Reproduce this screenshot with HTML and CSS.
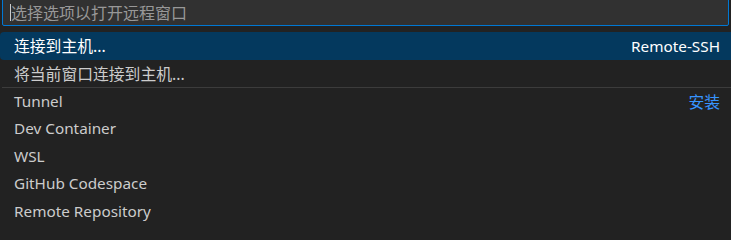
FILE: index.html
```html
<!DOCTYPE html>
<html lang="zh-CN">
<head>
<meta charset="utf-8">
<link rel="stylesheet" href="styles.css">
</head>
<body>
<div class="quick-input">
  <div class="input-wrap">
    <div class="input-box"><span class="caret"></span><span class="placeholder">选择选项以打开远程窗口</span></div>
  </div>
  <ul class="list">
    <li class="row selected"><span class="label cjk">连接到主机...</span><span class="detail">Remote-SSH</span></li>
    <li class="row"><span class="label cjk">将当前窗口连接到主机...</span></li>
    <li class="row sep"><span class="label">Tunnel</span><span class="link cjk">安装</span></li>
    <li class="row"><span class="label">Dev Container</span></li>
    <li class="row"><span class="label">WSL</span></li>
    <li class="row"><span class="label">GitHub Codespace</span></li>
    <li class="row"><span class="label">Remote Repository</span></li>
  </ul>
</div>
</body>
</html>
```
FILE: styles.css
```css
html, body {
  margin: 0;
  padding: 0;
  background: #222222;
  height: 100%;
  overflow: hidden;
}
body {
  font-family: "Noto Sans", "Noto Sans CJK SC", sans-serif;
  font-size: 15.3px;
  color: #cccccc;
}
.quick-input {
  width: 731px;
}
.input-wrap {
  padding: 0 2px 0 2px;
}
.input-box {
  margin-top: -4px;
  height: 30px;
  box-sizing: border-box;
  border: 1px solid #0078d4;
  border-radius: 2px;
  background: #313131;
  display: flex;
  align-items: center;
  padding-left: 7px;
  padding-top: 3px;
}
.caret {
  width: 1px;
  height: 17px;
  background: #cccccc;
}
.placeholder {
  color: #989898;
  font-size: 16px;
  line-height: 1;
}
.list {
  list-style: none;
  margin: 6px 0 0 0;
  padding: 0;
}
.row {
  height: 27.5px;
  box-sizing: border-box;
  display: flex;
  align-items: center;
  justify-content: space-between;
  padding: 0 11px 0 14px;
  white-space: nowrap;
}
.cjk {
  font-size: 15.8px;
}
.row.sep {
  border-top: 1px solid #3c3c3c;
  margin-left: 2px;
  padding-left: 12px;
}
.row.selected {
  background: #04395e;
  color: #ffffff;
  border-radius: 4px 0 0 4px;
}
.detail {
  color: #ffffff;
}
.link {
  color: #3794ff;
}
```
